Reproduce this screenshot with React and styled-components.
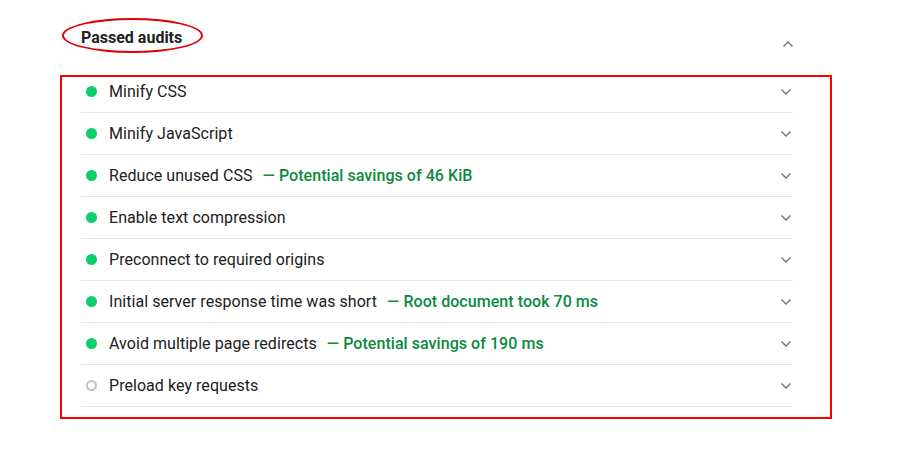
import styled, { createGlobalStyle } from "styled-components";

const GlobalStyle = createGlobalStyle`
  html, body {
    margin: 0;
    padding: 0;
    background: #ffffff;
    font-family: Roboto, "Liberation Sans", sans-serif;
    color: #212121;
  }
`;

const Page = styled.div`
  width: 910px;
  height: 451px;
  padding-left: 60px;
  box-sizing: border-box;
`;

const Section = styled.section`
  width: 772px;
`;

const GroupHeader = styled.div`
  display: flex;
  align-items: center;
  justify-content: space-between;
  height: 75px;
  padding: 0 38px 0 21px;
  box-sizing: border-box;
`;

const GroupTitle = styled.div`
  position: relative;
  font-size: 16px;
  font-weight: 700;
  line-height: 19px;
  margin-bottom: 1px;
`;

const Ring = styled.span`
  position: absolute;
  left: -19px;
  top: -10px;
  width: 137px;
  height: 31px;
  border: 2px solid #e00000;
  border-radius: 50%;
  pointer-events: none;
`;

const HeaderToggle = styled.span`
  display: flex;
  margin-top: 13px;
`;

const Highlight = styled.div`
  border: 2px solid #ff0000;
  padding: 0 37px 10px 19px;
`;

const List = styled.ul`
  list-style: none;
  margin: -6px 0 0;
  padding: 0;
`;

const Row = styled.li`
  display: flex;
  align-items: center;
  height: 42px;
  box-sizing: border-box;
  border-bottom: 1px solid #e6e6e6;
  padding: 0 0 0 4px;
  font-size: 16px;
  letter-spacing: 0.05px;
`;

const Score = styled.span`
  width: 11px;
  height: 11px;
  border-radius: 50%;
  box-sizing: border-box;
  flex: none;
  margin: 0 12px 0 1px;
  background: ${({ $pass }) => ($pass ? "#0cce6b" : "transparent")};
  border: ${({ $pass }) => ($pass ? "none" : "2px solid #c2c2c2")};
`;

const Title = styled.span`
  color: #212121;
`;

const Savings = styled.span`
  margin-left: 10px;
  color: #0b8a3e;
  font-weight: 500;
`;

const Toggle = styled.span`
  display: flex;
  margin-left: auto;
  margin-right: 1px;
`;

const Chevron = ({ up }) => (
  <svg width="12" height="8" viewBox="0 0 12 8">
    <path
      d={up ? "M1.5 6.5 L6 2 L10.5 6.5" : "M1.5 1.5 L6 6 L10.5 1.5"}
      fill="none"
      stroke="#757575"
      strokeWidth="1.4"
    />
  </svg>
);

const audits = [
  { title: "Minify CSS", pass: true },
  { title: "Minify JavaScript", pass: true },
  { title: "Reduce unused CSS", pass: true, note: "Potential savings of 46 KiB" },
  { title: "Enable text compression", pass: true },
  { title: "Preconnect to required origins", pass: true },
  { title: "Initial server response time was short", pass: true, note: "Root document took 70 ms" },
  { title: "Avoid multiple page redirects", pass: true, note: "Potential savings of 190 ms" },
  { title: "Preload key requests", pass: false },
];

const App = () => {
  return (
    <Page>
      <GlobalStyle />
      <Section>
        <GroupHeader>
          <GroupTitle>
            <Ring />
            Passed audits
          </GroupTitle>
          <HeaderToggle>
            <Chevron up />
          </HeaderToggle>
        </GroupHeader>
        <Highlight>
          <List>
            {audits.map((a) => (
              <Row key={a.title}>
                <Score $pass={a.pass} />
                <Title>{a.title}</Title>
                {a.note && <Savings>— {a.note}</Savings>}
                <Toggle>
                  <Chevron />
                </Toggle>
              </Row>
            ))}
          </List>
        </Highlight>
      </Section>
    </Page>
  );
};

export default App;
